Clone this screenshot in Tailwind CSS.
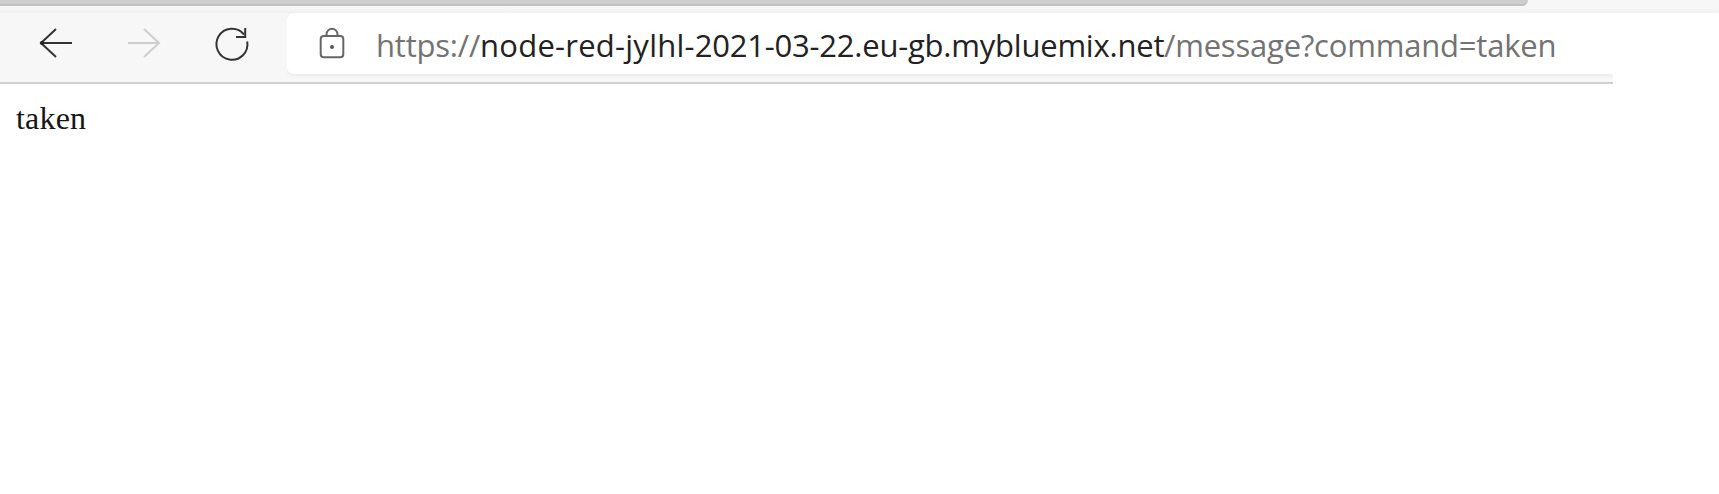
<!DOCTYPE html>
<html lang="en">
<head>
<meta charset="utf-8">
<title>taken</title>
<script src="https://cdn.jsdelivr.net/npm/@tailwindcss/browser@4"></script>
</head>
<body class="bg-white h-[494px] overflow-hidden">
<header>
  <div class="h-[13px] w-full bg-gradient-to-b from-[#f7f7f7] from-60% to-[#f0f0f0] flex">
    <div class="h-[6px] w-[1528px] bg-[#cdcdcd] border-b-2 border-[#c0c0c0] rounded-br-[6px]"></div>
  </div>
  <div class="h-[71px] w-[1613px] bg-[#f7f7f7] border-b-2 border-[#d0d0d0] flex">
    <nav class="w-[287px] shrink-0">
      <svg class="w-[287px] h-[69px]" viewBox="0 13 287 69" fill="none" stroke-width="2">
        <path d="M72 43H41M56 29L41 43L56 57" stroke="#333"/>
        <circle cx="42" cy="43" r="2" fill="#222"/>
        <path d="M128 43H159M144 29L159 43L144 57" stroke="#cecece"/>
        <path d="M247.2 41.5A15.5 15.5 0 1 1 244 34.5" stroke="#333"/>
        <path d="M245.2 28V37H236" stroke="#333"/>
      </svg>
    </nav>
    <div class="flex-1 overflow-hidden">
      <div class="h-[61px] w-full bg-white rounded-l-[7px] flex shadow-[0_1px_4px_rgba(0,0,0,0.08)]">
        <svg class="w-[89px] h-[61px] shrink-0" viewBox="287 13 89 61" fill="none" stroke="#666" stroke-width="2">
          <rect x="320.7" y="36" width="22.6" height="21.3" rx="3"/>
          <path d="M326.5 36V34.3a5.5 5.5 0 0 1 11 0V36"/>
          <circle cx="332" cy="47" r="2" fill="#555" stroke="none"/>
        </svg>
        <div class="flex text-[31px] leading-[61px] pt-[2px] whitespace-nowrap font-['Open_Sans','Noto_Sans',sans-serif] text-[#737373]">
          <span class="w-[104px] tracking-[-0.2px]">https://</span>
          <span class="w-[684px] text-[#222]"><span class="tracking-[0.25px]">node-red-jylhl-</span><span class="tracking-[-0.22px]">2021-03-22.eu-gb.mybluemix.net</span></span>
          <span class="tracking-[-0.2px]">/message?command=taken</span>
        </div>
      </div>
    </div>
  </div>
</header>
<main class="px-4 pt-[16px] text-[32px] leading-[37px] tracking-[0.2px] text-[#161616] font-['Liberation_Serif',serif]">taken</main>
</body>
</html>
